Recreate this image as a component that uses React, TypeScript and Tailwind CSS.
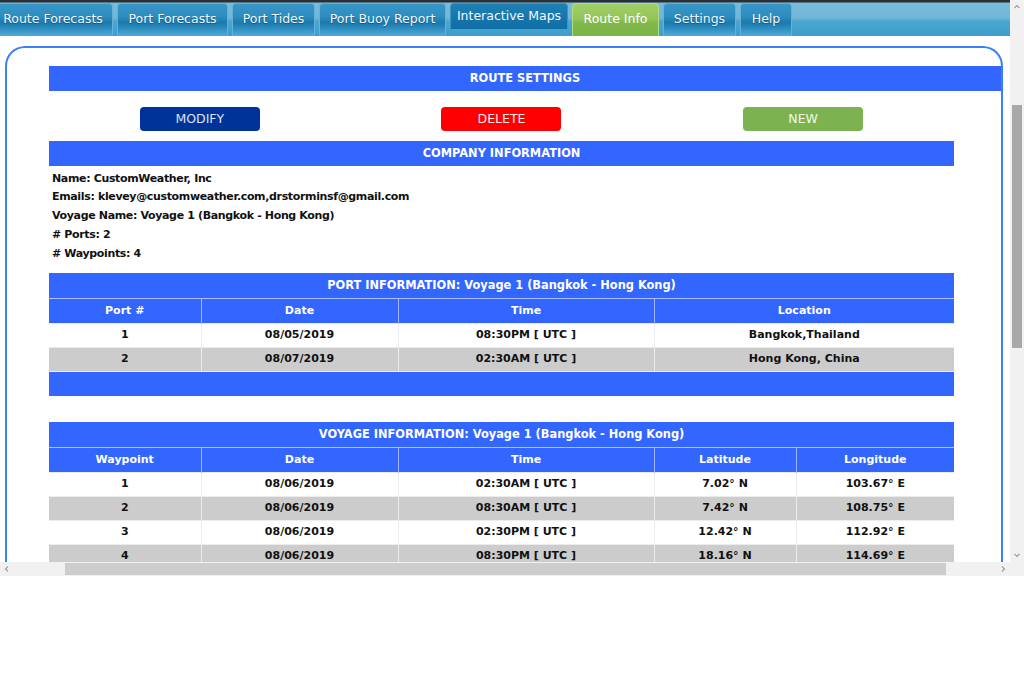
import React from "react";

const tabs = [
  { label: "Route Forecasts", w: "w-[120px] -ml-[7px]", kind: "normal" },
  { label: "Port Forecasts", w: "w-[111px]", kind: "normal" },
  { label: "Port Tides", w: "w-[83px]", kind: "normal" },
  { label: "Port Buoy Report", w: "w-[127px]", kind: "normal" },
  { label: "Interactive Maps", w: "w-[118px]", kind: "hover" },
  { label: "Route Info", w: "w-[87px]", kind: "active" },
  { label: "Settings", w: "w-[73px]", kind: "normal" },
  { label: "Help", w: "w-[52px]", kind: "normal" },
];

const ports = [
  ["1", "08/05/2019", "08:30PM [ UTC ]", "Bangkok,Thailand"],
  ["2", "08/07/2019", "02:30AM [ UTC ]", "Hong Kong, China"],
];

const waypoints = [
  ["1", "08/06/2019", "02:30AM [ UTC ]", "7.02° N", "103.67° E"],
  ["2", "08/06/2019", "08:30AM [ UTC ]", "7.42° N", "108.75° E"],
  ["3", "08/06/2019", "02:30PM [ UTC ]", "12.42° N", "112.92° E"],
  ["4", "08/06/2019", "08:30PM [ UTC ]", "18.16° N", "114.69° E"],
];

function Tab({ label, w, kind }: { label: string; w: string; kind: string }) {
  if (kind === "hover") {
    return (
      <div
        className={`${w} flex h-[26px] items-center justify-center self-start rounded-t-[4px] border border-b-0 border-[#3d95c4] bg-[linear-gradient(to_bottom,#1f80b5,#0e6ea5)] text-[12.5px] text-[#f2f8fc]`}
      >
        {label}
      </div>
    );
  }
  if (kind === "active") {
    return (
      <div
        className={`${w} flex h-[33px] items-center justify-center rounded-t-[4px] border border-b-0 border-[#b4dc86] bg-[linear-gradient(to_bottom,#a2cf68_0%,#93c55a_45%,#80b84a_60%,#7db447_100%)] pb-[1px] text-[12.5px] text-white`}
      >
        {label}
      </div>
    );
  }
  return (
    <div
      className={`${w} flex h-[33px] items-center justify-center rounded-t-[4px] border border-b-0 border-[#63b2d9] bg-[linear-gradient(to_bottom,#3896c6_0%,#2d8dbf_40%,#1c79ac_58%,#2c8cbe_75%,#52abd5_100%)] pb-[1px] text-[12.5px] text-[#eef6fa] [text-shadow:0_1px_1px_rgba(0,40,70,0.45)]`}
    >
      {label}
    </div>
  );
}

function BlueBar({ children }: { children?: React.ReactNode }) {
  return (
    <div className="flex h-[25px] items-center justify-center bg-[#3366ff] text-[11.4px] font-bold text-white">
      {children}
    </div>
  );
}

function Chevron({ d }: { d: string }) {
  return (
    <svg viewBox="0 0 8 8" className="h-[8px] w-[8px]" aria-hidden="true">
      <path d={d} fill="none" stroke="#a0a0a0" strokeWidth="1.2" />
    </svg>
  );
}

function DataTable({
  title,
  headers,
  widths,
  rows,
  footer,
}: {
  title: string;
  headers: string[];
  widths: string[];
  rows: string[][];
  footer?: boolean;
}) {
  return (
    <table className="w-[905px] table-fixed border-collapse text-[11px] font-bold">
      <colgroup>
        {widths.map((w, i) => (
          <col key={i} className={w} />
        ))}
      </colgroup>
      <thead>
        <tr className="h-[25px] bg-[#3366ff] text-[11.4px] text-white">
          <th colSpan={headers.length} className="border-b border-[#aac0ff]">
            {title}
          </th>
        </tr>
        <tr className="h-[25px] bg-[#3366ff] text-white">
          {headers.map((h, i) => (
            <th key={i} className="border-x border-[#9db6ff] first:border-l-0 last:border-r-0">
              {h}
            </th>
          ))}
        </tr>
      </thead>
      <tbody>
        {rows.map((r, i) => (
          <tr key={i} className={`h-[24px] text-[#111] ${i % 2 === 1 ? "bg-[#cccccc]" : "bg-white"}`}>
            {r.map((c, j) => (
              <td
                key={j}
                className="border border-[#ececec] text-center first:border-l-0 last:border-r-0"
              >
                {c}
              </td>
            ))}
          </tr>
        ))}
        {footer && (
          <tr className="h-[25px] bg-[#3366ff]">
            <td colSpan={headers.length} className="border-t border-[#ececec]" />
          </tr>
        )}
      </tbody>
    </table>
  );
}

export default function App() {
  return (
    <div className="h-[686px] w-[1024px] overflow-hidden bg-white font-['DejaVu_Sans',Verdana,sans-serif]">
      <div className="flex h-[576px]">
        <div className="flex w-[1010px] flex-col">
          <div className="h-[562px] overflow-hidden bg-white">
            {/* tab bar */}
            <div className="flex h-[36px] flex-col bg-[linear-gradient(to_bottom,#2b2f33_0px,#2b2f33_2px,#78bbdb_3px,#72b7d8_50%,#4ba7d1_58%,#3e9dcb_100%)]">
              <div className="flex flex-1 items-end gap-[4px] pt-[3px]">
                {tabs.map((t) => (
                  <Tab key={t.label} {...t} />
                ))}
              </div>
              <div className="h-px bg-[#6cb7dc]" />
            </div>

            {/* panel */}
            <div className="ml-[5px] mr-[7px] mt-[10px] h-[560px] rounded-t-[20px] border-2 border-b-0 border-[#3a80fa] pl-[42px] pt-[18px]">
              <BlueBar>ROUTE SETTINGS</BlueBar>

              <div className="grid w-[905px] grid-cols-3 pb-[10px] pt-[16px]">
                <div className="flex justify-center">
                  <button className="h-[24px] w-[120px] rounded-[4px] bg-[#003399] text-[12.5px] text-[#dde4f5]">
                    MODIFY
                  </button>
                </div>
                <div className="flex justify-center">
                  <button className="h-[24px] w-[120px] rounded-[4px] bg-[#ff0000] text-[12.5px] text-[#ffe9e9]">
                    DELETE
                  </button>
                </div>
                <div className="flex justify-center">
                  <button className="h-[24px] w-[120px] rounded-[4px] bg-[#7cb350] text-[12.5px] text-[#f0f7ea]">
                    NEW
                  </button>
                </div>
              </div>

              <div className="w-[905px]">
                <BlueBar>COMPANY INFORMATION</BlueBar>
              </div>

              <div className="pl-[3px] pt-[3.5px] text-[11px] font-bold leading-[18.8px] tracking-[-0.35px] text-[#111]">
                <div>Name: CustomWeather, Inc</div>
                <div>Emails: klevey@customweather.com,drstorminsf@gmail.com</div>
                <div>Voyage Name: Voyage 1 (Bangkok - Hong Kong)</div>
                <div># Ports: 2</div>
                <div># Waypoints: 4</div>
              </div>

              <div className="pt-[10px]">
                <DataTable
                  title="PORT INFORMATION: Voyage 1 (Bangkok - Hong Kong)"
                  headers={["Port #", "Date", "Time", "Location"]}
                  widths={["w-[152px]", "w-[197px]", "w-[256px]", "w-[300px]"]}
                  rows={ports}
                  footer
                />
              </div>

              <div className="pt-[26px]">
                <DataTable
                  title="VOYAGE INFORMATION: Voyage 1 (Bangkok - Hong Kong)"
                  headers={["Waypoint", "Date", "Time", "Latitude", "Longitude"]}
                  widths={["w-[152px]", "w-[197px]", "w-[256px]", "w-[142px]", "w-[158px]"]}
                  rows={waypoints}
                />
              </div>
            </div>
          </div>

          {/* horizontal scrollbar */}
          <div className="flex h-[14px] items-center bg-[#f1f1f1]">
            <div className="flex w-[14px] justify-center">
              <Chevron d="M5 1.5 L2.5 4 L5 6.5" />
            </div>
            <div className="ml-[51px] h-[12px] w-[881px] bg-[#cdcdcd]" />
            <div className="flex-1" />
            <div className="flex w-[14px] justify-center">
              <Chevron d="M3 1.5 L5.5 4 L3 6.5" />
            </div>
          </div>
        </div>

        {/* vertical scrollbar */}
        <div className="flex w-[14px] flex-col bg-[#f1f1f1]">
          <div className="flex h-[562px] flex-col items-center">
            <div className="flex h-[14px] items-center">
              <Chevron d="M1.5 5 L4 2.5 L6.5 5" />
            </div>
            <div className="mt-[91px] h-[243px] w-[10px] bg-[#a8a8a8]" />
            <div className="flex-1" />
            <div className="flex h-[14px] items-center">
              <Chevron d="M1.5 3 L4 5.5 L6.5 3" />
            </div>
          </div>
          <div className="h-[14px] bg-[#f0f0f0]" />
        </div>
      </div>
    </div>
  );
}
